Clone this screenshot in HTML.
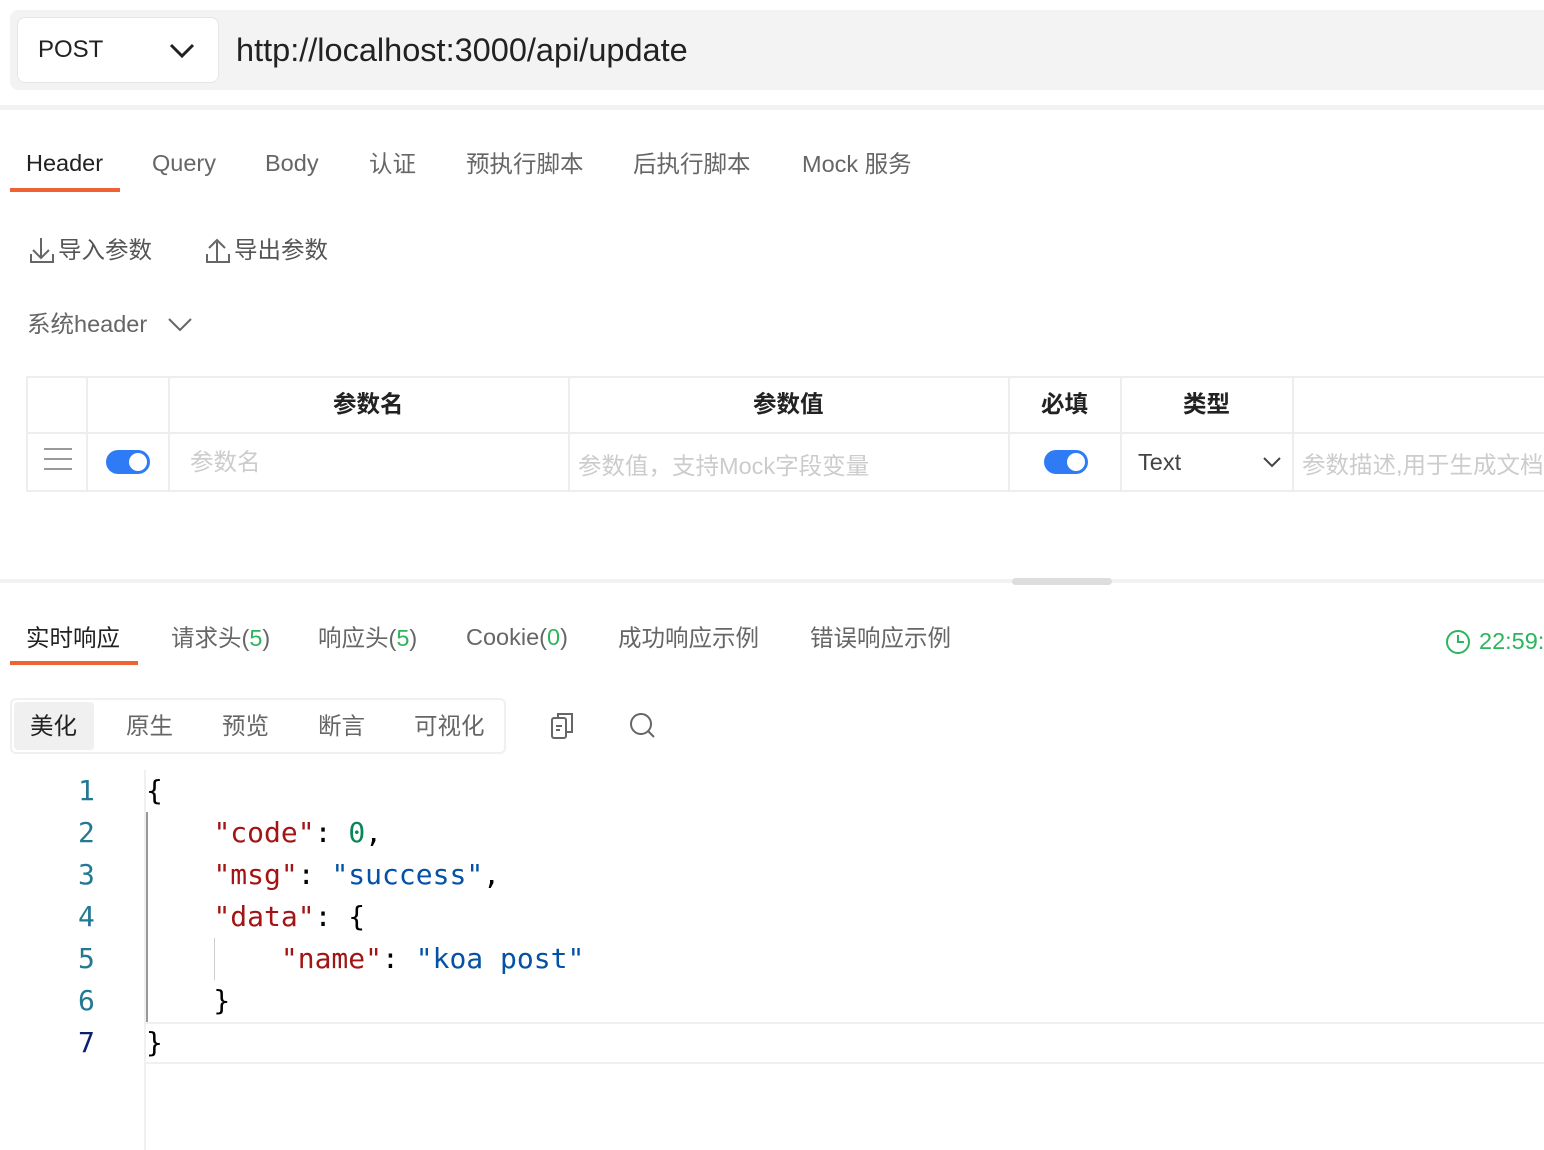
<!DOCTYPE html>
<html><head><meta charset="utf-8"><style>
*{margin:0;padding:0;box-sizing:border-box}
body{width:1544px;height:1150px;overflow:hidden;background:#fff;font-family:"Liberation Sans","Noto Sans CJK SC",sans-serif;color:#333;position:relative}
.a{position:absolute;white-space:nowrap}
.mono{font-family:"DejaVu Sans Mono","Liberation Mono",monospace;font-size:28px}
.tog{position:absolute;width:44px;height:24px;border-radius:12px;background:#2f7bf5}
.tog:after{content:"";position:absolute;right:3px;top:3px;width:18px;height:18px;border-radius:50%;background:#fff}
.g{color:#2db55d}
</style></head><body>
<div class="a" style="left:10px;top:10px;width:1534px;height:80px;background:#f3f3f3;border-radius:8px 0 0 8px"></div>
<div class="a" style="left:17px;top:17px;width:202px;height:66px;background:#fff;border:1px solid #e6e6e6;border-radius:8px"></div>
<div class="a" style="left:38px;top:36px;font-size:24px;color:#222">POST</div>
<svg class="a" style="left:168px;top:40px" width="28" height="20"><path d="M3 5l11 11L25 5" fill="none" stroke="#222" stroke-width="3"/></svg>
<div class="a" style="left:236px;top:32px;font-size:32.5px;color:#222">http://localhost:3000/api/update</div>
<div class="a" style="left:0;top:105px;width:1544px;height:5px;background:#f2f2f2"></div>

<div class="a" style="left:26px;top:150px;font-size:23.5px;color:#222">Header</div>
<div class="a" style="left:10px;top:188px;width:110px;height:4px;background:#ee6236"></div>
<div class="a" style="left:152px;top:150px;font-size:23.5px;color:#666">Query</div>
<div class="a" style="left:265px;top:150px;font-size:23.5px;color:#666">Body</div>
<div class="a" style="left:369px;top:145px;font-size:23.5px;color:#666">认证</div>
<div class="a" style="left:466px;top:145px;font-size:23.5px;color:#666">预执行脚本</div>
<div class="a" style="left:633px;top:145px;font-size:23.5px;color:#666">后执行脚本</div>
<div class="a" style="left:802px;top:145px;font-size:23.5px;color:#666">Mock 服务</div>

<svg class="a" style="left:29px;top:236px" width="26" height="28"><path d="M12 2v20M4 14l8 8 8-8M2 18v8h22v-8" fill="none" stroke="#666" stroke-width="2"/></svg>
<div class="a" style="left:58px;top:231px;font-size:23.5px;color:#555">导入参数</div>
<svg class="a" style="left:205px;top:236px" width="26" height="28"><path d="M12 26V6M4 12l8-8 8 8M2 18v8h22v-8" fill="none" stroke="#666" stroke-width="2"/></svg>
<div class="a" style="left:234px;top:231px;font-size:23.5px;color:#555">导出参数</div>
<div class="a" style="left:27px;top:305px;font-size:23.5px;color:#666">系统header</div>
<svg class="a" style="left:167px;top:316px" width="26" height="18"><path d="M2 3l11 11L24 3" fill="none" stroke="#666" stroke-width="2"/></svg>

<div class="a" style="left:26px;top:376px;width:1518px;height:116px;border:2px solid #eee;border-right:0"></div>
<div class="a" style="left:26px;top:432px;width:1518px;height:2px;background:#eee"></div>
<div class="a" style="left:86px;top:376px;width:2px;height:116px;background:#eee"></div>
<div class="a" style="left:168px;top:376px;width:2px;height:116px;background:#eee"></div>
<div class="a" style="left:568px;top:376px;width:2px;height:116px;background:#eee"></div>
<div class="a" style="left:1008px;top:376px;width:2px;height:116px;background:#eee"></div>
<div class="a" style="left:1120px;top:376px;width:2px;height:116px;background:#eee"></div>
<div class="a" style="left:1292px;top:376px;width:2px;height:116px;background:#eee"></div>
<div class="a" style="left:333px;top:385px;font-size:23.5px;font-weight:bold;color:#222">参数名</div>
<div class="a" style="left:753px;top:385px;font-size:23.5px;font-weight:bold;color:#222">参数值</div>
<div class="a" style="left:1041px;top:385px;font-size:23.5px;font-weight:bold;color:#222">必填</div>
<div class="a" style="left:1183px;top:385px;font-size:23.5px;font-weight:bold;color:#222">类型</div>
<div class="a" style="left:44px;top:448px;width:28px;height:2px;background:#999;box-shadow:0 10px 0 #999,0 20px 0 #999"></div>
<div class="tog" style="left:106px;top:450px"></div>
<div class="a" style="left:190px;top:443px;font-size:23.5px;color:#ccc">参数名</div>
<div class="a" style="left:578px;top:447px;font-size:23.5px;color:#ccc">参数值，支持Mock字段变量</div>
<div class="tog" style="left:1044px;top:450px"></div>
<div class="a" style="left:1138px;top:449px;font-size:23.5px;color:#444">Text</div>
<svg class="a" style="left:1262px;top:455px" width="20" height="14"><path d="M2 3l8 8 8-8" fill="none" stroke="#444" stroke-width="2"/></svg>
<div class="a" style="left:1302px;top:446px;font-size:23.5px;color:#ccc">参数描述,用于生成文档</div>

<div class="a" style="left:0;top:579px;width:1544px;height:4px;background:#f2f2f2"></div>
<div class="a" style="left:1012px;top:578px;width:100px;height:7px;border-radius:4px;background:#ddd"></div>

<div class="a" style="left:26px;top:619px;font-size:23.5px;color:#222">实时响应</div>
<div class="a" style="left:10px;top:661px;width:128px;height:4px;background:#ee6236"></div>
<div class="a" style="left:171px;top:619px;font-size:23.5px;color:#666">请求头(<span class="g">5</span>)</div>
<div class="a" style="left:318px;top:619px;font-size:23.5px;color:#666">响应头(<span class="g">5</span>)</div>
<div class="a" style="left:466px;top:624px;font-size:23.5px;color:#666">Cookie(<span class="g">0</span>)</div>
<div class="a" style="left:618px;top:619px;font-size:23.5px;color:#666">成功响应示例</div>
<div class="a" style="left:810px;top:619px;font-size:23.5px;color:#666">错误响应示例</div>
<svg class="a" style="left:1445px;top:629px" width="26" height="26"><circle cx="13" cy="13" r="11" fill="none" stroke="#2db55d" stroke-width="2"/><path d="M13 6v7h6" fill="none" stroke="#2db55d" stroke-width="2"/></svg>
<div class="a g" style="left:1479px;top:628px;font-size:23.5px">22:59:</div>

<div class="a" style="left:10px;top:698px;width:496px;height:56px;border:2px solid #f0f0f0;border-radius:6px"></div>
<div class="a" style="left:14px;top:702px;width:80px;height:48px;background:#f0f0f0;border-radius:4px"></div>
<div class="a" style="left:30px;top:707px;font-size:23.5px;color:#222">美化</div>
<div class="a" style="left:126px;top:707px;font-size:23.5px;color:#666">原生</div>
<div class="a" style="left:222px;top:707px;font-size:23.5px;color:#666">预览</div>
<div class="a" style="left:318px;top:707px;font-size:23.5px;color:#666">断言</div>
<div class="a" style="left:414px;top:707px;font-size:23.5px;color:#666">可视化</div>
<svg class="a" style="left:550px;top:712px" width="26" height="28"><rect x="2" y="6" width="14" height="20" rx="2" fill="none" stroke="#666" stroke-width="2"/><path d="M8 6V2h14v18h-6M6 14h6M6 18h4" fill="none" stroke="#666" stroke-width="2"/></svg>
<svg class="a" style="left:629px;top:712px" width="28" height="28"><circle cx="12" cy="12" r="10" fill="none" stroke="#666" stroke-width="2"/><path d="M19 19l6 6" stroke="#666" stroke-width="2"/></svg>

<div class="a" style="left:144px;top:770px;width:2px;height:380px;background:#f0f0f0"></div>
<div class="a" style="left:146px;top:812px;width:2px;height:210px;background:#999"></div>
<div class="a" style="left:214px;top:938px;width:1px;height:42px;background:#ccc"></div>
<div class="a" style="left:146px;top:1022px;width:1398px;height:42px;border-top:2px solid #f0f0f0;border-bottom:2px solid #f0f0f0"></div>
<div class="a mono" style="left:78px;top:770px;line-height:42px;color:#237893;white-space:pre">1
2
3
4
5
6
<span style="color:#0b216f">7</span></div>
<div class="a mono" style="left:146px;top:770px;line-height:42px;color:#000;white-space:pre">{
    <span style="color:#a31515">"code"</span>: <span style="color:#098658">0</span>,
    <span style="color:#a31515">"msg"</span>: <span style="color:#0451a5">"success"</span>,
    <span style="color:#a31515">"data"</span>: {
        <span style="color:#a31515">"name"</span>: <span style="color:#0451a5">"koa post"</span>
    }
}</div>
</body></html>
